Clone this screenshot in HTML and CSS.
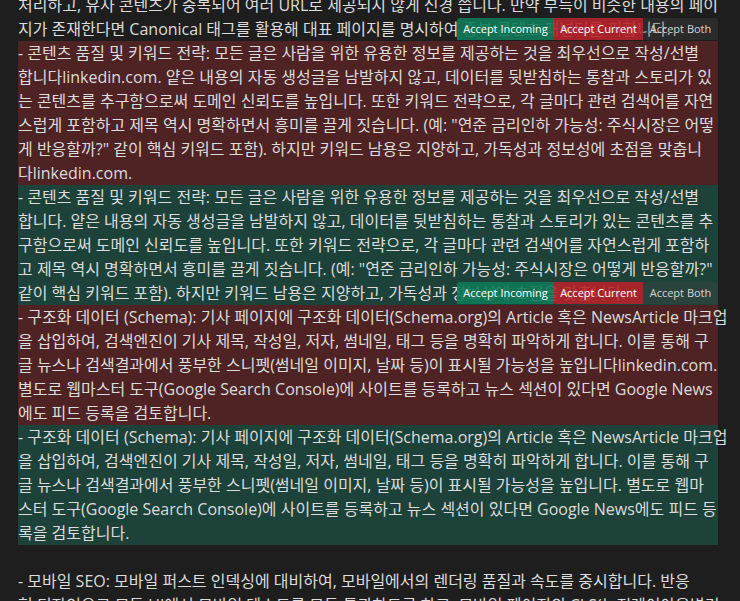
FILE: index.html
```html
<!DOCTYPE html>
<html lang="ko">
<head>
<meta charset="utf-8">
<title>Merge conflict</title>
<link rel="stylesheet" href="styles.css">
</head>
<body>
<div class="editor">
  <div class="doc">
    <div class="line">처리하고, 유사 콘텐츠가 중복되어 여러 URL로 제공되지 않게 신경 씁니다. 만약 부득이 비슷한 내용의 페이</div>
    <div class="line anchor">지가 존재한다면 Canonical 태그를 활용해 대표 페이지를 명시하여 중복 콘텐츠 패널티를 피합니다.
      <div class="bar">
        <span class="btn incoming">Accept Incoming</span>
        <span class="btn current">Accept Current</span>
        <span class="btn both">Accept Both</span>
      </div>
    </div>
    <div class="block cur">
      <div class="line">- 콘텐츠 품질 및 키워드 전략: 모든 글은 사람을 위한 유용한 정보를 제공하는 것을 최우선으로 작성/선별</div>
      <div class="line">합니다linkedin.com. 얕은 내용의 자동 생성글을 남발하지 않고, 데이터를 뒷받침하는 통찰과 스토리가 있</div>
      <div class="line">는 콘텐츠를 추구함으로써 도메인 신뢰도를 높입니다. 또한 키워드 전략으로, 각 글마다 관련 검색어를 자연</div>
      <div class="line">스럽게 포함하고 제목 역시 명확하면서 흥미를 끌게 짓습니다. (예: "연준 금리인하 가능성: 주식시장은 어떻</div>
      <div class="line">게 반응할까?" 같이 핵심 키워드 포함). 하지만 키워드 남용은 지양하고, 가독성과 정보성에 초점을 맞춥니</div>
      <div class="line">다linkedin.com.</div>
    </div>
    <div class="block inc">
      <div class="line">- 콘텐츠 품질 및 키워드 전략: 모든 글은 사람을 위한 유용한 정보를 제공하는 것을 최우선으로 작성/선별</div>
      <div class="line">합니다. 얕은 내용의 자동 생성글을 남발하지 않고, 데이터를 뒷받침하는 통찰과 스토리가 있는 콘텐츠를 추</div>
      <div class="line">구함으로써 도메인 신뢰도를 높입니다. 또한 키워드 전략으로, 각 글마다 관련 검색어를 자연스럽게 포함하</div>
      <div class="line">고 제목 역시 명확하면서 흥미를 끌게 짓습니다. (예: "연준 금리인하 가능성: 주식시장은 어떻게 반응할까?"</div>
      <div class="line anchor">같이 핵심 키워드 포함). 하지만 키워드 남용은 지양하고, 가독성과 정보성에 초점을 맞춥니다.
        <div class="bar">
          <span class="btn incoming">Accept Incoming</span>
          <span class="btn current">Accept Current</span>
          <span class="btn both">Accept Both</span>
        </div>
      </div>
    </div>
    <div class="block cur">
      <div class="line">- 구조화 데이터 (Schema): 기사 페이지에 구조화 데이터(Schema.org)의 Article 혹은 NewsArticle 마크업</div>
      <div class="line">을 삽입하여, 검색엔진이 기사 제목, 작성일, 저자, 썸네일, 태그 등을 명확히 파악하게 합니다. 이를 통해 구</div>
      <div class="line">글 뉴스나 검색결과에서 풍부한 스니펫(썸네일 이미지, 날짜 등)이 표시될 가능성을 높입니다linkedin.com.</div>
      <div class="line">별도로 웹마스터 도구(Google Search Console)에 사이트를 등록하고 뉴스 섹션이 있다면 Google News</div>
      <div class="line">에도 피드 등록을 검토합니다.</div>
    </div>
    <div class="block inc">
      <div class="line">- 구조화 데이터 (Schema): 기사 페이지에 구조화 데이터(Schema.org)의 Article 혹은 NewsArticle 마크업</div>
      <div class="line">을 삽입하여, 검색엔진이 기사 제목, 작성일, 저자, 썸네일, 태그 등을 명확히 파악하게 합니다. 이를 통해 구</div>
      <div class="line">글 뉴스나 검색결과에서 풍부한 스니펫(썸네일 이미지, 날짜 등)이 표시될 가능성을 높입니다. 별도로 웹마</div>
      <div class="line">스터 도구(Google Search Console)에 사이트를 등록하고 뉴스 섹션이 있다면 Google News에도 피드 등</div>
      <div class="line">록을 검토합니다.</div>
    </div>
    <div class="line empty"></div>
    <div class="line">- 모바일 SEO: 모바일 퍼스트 인덱싱에 대비하여, 모바일에서의 렌더링 품질과 속도를 중시합니다. 반응</div>
    <div class="line">형 디자인으로 모든 UI에서 모바일 테스트를 모두 통과하도록 하고, 모바일 페이지의 CLS(누적레이아웃변경</div>
  </div>
</div>
</body>
</html>
```

FILE: styles.css
```css
html, body {
  margin: 0;
  padding: 0;
  height: 100%;
  overflow: hidden;
  background: #1e1e1e;
}

.editor {
  padding-left: 18px;
  font-family: "Open Sans", "Noto Sans CJK KR", sans-serif;
  font-size: 16px;
  color: #dcdcdc;
}

.doc {
  width: 700px;
  margin-top: -7px;
}

.line {
  height: 24px;
  line-height: 24px;
  white-space: nowrap;
}

.anchor {
  position: relative;
}

.block.cur {
  background: #4f2224;
}

.block.inc {
  background: #1c4239;
}

.bar {
  position: absolute;
  right: 0;
  top: 1px;
  height: 22px;
  display: flex;
  font-family: "Open Sans", sans-serif;
  font-size: 11px;
  line-height: 22px;
  border-radius: 3px 3px 0 0;
  overflow: hidden;
}

.btn {
  display: block;
  text-align: center;
  white-space: nowrap;
}

.btn.incoming {
  width: 97px;
  background: rgba(15, 122, 88, 0.9);
  color: #ffffff;
}

.btn.current {
  width: 89px;
  background: rgba(182, 34, 42, 0.9);
  color: #ffffff;
}

.btn.both {
  width: 75px;
  background: rgba(70, 70, 70, 0.35);
  color: #d6d6d6;
}
```
